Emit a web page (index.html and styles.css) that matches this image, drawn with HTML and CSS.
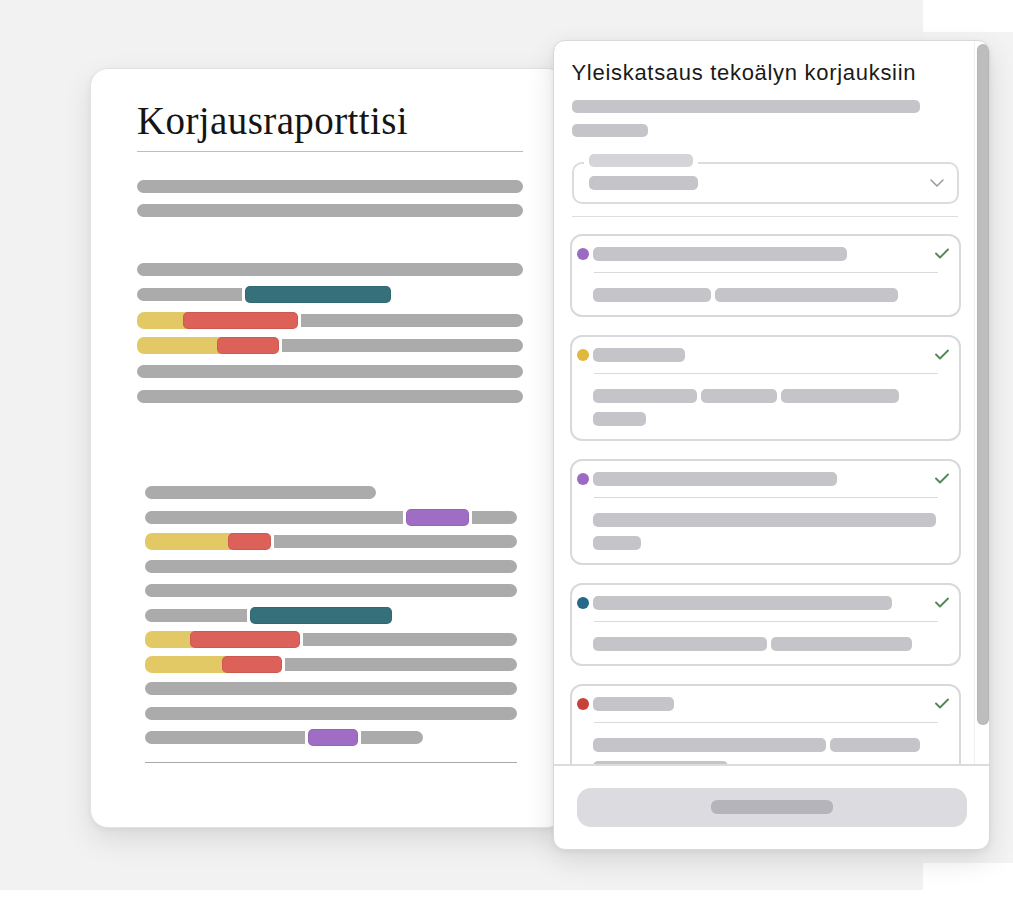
FILE: index.html
```html
<!DOCTYPE html>
<html lang="fi">
<head>
<meta charset="utf-8">
<title>Korjausraportti</title>
<link rel="stylesheet" href="styles.css">
</head>
<body>
<div class="stage">
  <section class="doc">
    <h1 class="doc-title">Korjausraporttisi</h1>

    <div class="group g1a">
      <div class="row"><span class="bar full"></span></div>
      <div class="row"><span class="bar full"></span></div>
    </div>

    <div class="group g1b">
      <div class="row"><span class="bar full"></span></div>
      <div class="row"><span class="bar l" style="width:105px"></span><span class="chip teal" style="width:146px"></span></div>
      <div class="row"><span class="hl" style="width:50px"></span><span class="chip red over" style="width:115px"></span><span class="bar r grow"></span></div>
      <div class="row"><span class="hl" style="width:84px"></span><span class="chip red over" style="width:62px"></span><span class="bar r grow"></span></div>
      <div class="row"><span class="bar full"></span></div>
      <div class="row"><span class="bar full"></span></div>
    </div>

    <div class="group g2">
      <div class="row"><span class="bar full" style="width:231px;flex:none"></span></div>
      <div class="row"><span class="bar l" style="width:258px"></span><span class="chip purple" style="width:63px"></span><span class="bar r grow"></span></div>
      <div class="row"><span class="hl" style="width:87px"></span><span class="chip red over" style="width:43px"></span><span class="bar r grow"></span></div>
      <div class="row"><span class="bar full"></span></div>
      <div class="row"><span class="bar full"></span></div>
      <div class="row"><span class="bar l" style="width:102px"></span><span class="chip teal" style="width:142px"></span></div>
      <div class="row"><span class="hl" style="width:49px"></span><span class="chip red over" style="width:110px"></span><span class="bar r grow"></span></div>
      <div class="row"><span class="hl" style="width:81px"></span><span class="chip red over" style="width:60px"></span><span class="bar r grow"></span></div>
      <div class="row"><span class="bar full"></span></div>
      <div class="row"><span class="bar full"></span></div>
      <div class="row"><span class="bar l" style="width:160px"></span><span class="chip purple" style="width:50px"></span><span class="bar r" style="width:62px"></span></div>
      <div class="rule"></div>
    </div>
  </section>

  <aside class="panel">
    <div class="scroll">
      <div class="content">
        <h2 class="panel-title">Yleiskatsaus tekoälyn korjauksiin</h2>
        <div class="sk line1" style="width:348px"></div>
        <div class="sk line2" style="width:76px"></div>

        <div class="select">
          <span class="select-label"><span class="sk light" style="width:104px"></span></span>
          <span class="sk value" style="width:109px"></span>
          <svg class="chev" width="14" height="8" viewBox="0 0 14 8"><polyline points="1,1 7,7 13,1" fill="none" stroke="#9a9a9a" stroke-width="1.5" stroke-linecap="round" stroke-linejoin="round"/></svg>
        </div>

        <div class="divider"></div>

        <div class="cards">
          <div class="card">
            <div class="card-head">
              <span class="dot purple"></span>
              <span class="sk t" style="width:254px"></span>
              <svg class="check" width="14" height="11" viewBox="0 0 14 11"><polyline points="1,5.5 5,9.5 13,1.5" fill="none" stroke="#558859" stroke-width="1.9" stroke-linecap="round" stroke-linejoin="round"/></svg>
            </div>
            <div class="card-rule"></div>
            <div class="card-body">
              <div class="sk-row"><span class="sk" style="width:118px"></span><span class="sk" style="width:183px"></span></div>
            </div>
          </div>

          <div class="card">
            <div class="card-head">
              <span class="dot yellow"></span>
              <span class="sk t" style="width:92px"></span>
              <svg class="check" width="14" height="11" viewBox="0 0 14 11"><polyline points="1,5.5 5,9.5 13,1.5" fill="none" stroke="#558859" stroke-width="1.9" stroke-linecap="round" stroke-linejoin="round"/></svg>
            </div>
            <div class="card-rule"></div>
            <div class="card-body">
              <div class="sk-row"><span class="sk" style="width:104px"></span><span class="sk" style="width:76px"></span><span class="sk" style="width:118px"></span></div>
              <div class="sk-row"><span class="sk" style="width:53px"></span></div>
            </div>
          </div>

          <div class="card">
            <div class="card-head">
              <span class="dot purple"></span>
              <span class="sk t" style="width:244px"></span>
              <svg class="check" width="14" height="11" viewBox="0 0 14 11"><polyline points="1,5.5 5,9.5 13,1.5" fill="none" stroke="#558859" stroke-width="1.9" stroke-linecap="round" stroke-linejoin="round"/></svg>
            </div>
            <div class="card-rule"></div>
            <div class="card-body">
              <div class="sk-row"><span class="sk" style="width:343px"></span></div>
              <div class="sk-row"><span class="sk" style="width:48px"></span></div>
            </div>
          </div>

          <div class="card">
            <div class="card-head">
              <span class="dot teal"></span>
              <span class="sk t" style="width:299px"></span>
              <svg class="check" width="14" height="11" viewBox="0 0 14 11"><polyline points="1,5.5 5,9.5 13,1.5" fill="none" stroke="#558859" stroke-width="1.9" stroke-linecap="round" stroke-linejoin="round"/></svg>
            </div>
            <div class="card-rule"></div>
            <div class="card-body">
              <div class="sk-row"><span class="sk" style="width:174px"></span><span class="sk" style="width:141px"></span></div>
            </div>
          </div>

          <div class="card">
            <div class="card-head">
              <span class="dot red"></span>
              <span class="sk t" style="width:81px"></span>
              <svg class="check" width="14" height="11" viewBox="0 0 14 11"><polyline points="1,5.5 5,9.5 13,1.5" fill="none" stroke="#558859" stroke-width="1.9" stroke-linecap="round" stroke-linejoin="round"/></svg>
            </div>
            <div class="card-rule"></div>
            <div class="card-body">
              <div class="sk-row"><span class="sk" style="width:233px"></span><span class="sk" style="width:90px"></span></div>
              <div class="sk-row"><span class="sk" style="width:135px"></span></div>
            </div>
          </div>
        </div>
      </div>
      <div class="track"><div class="thumb"></div></div>
    </div>
    <div class="footer">
      <button class="btn" type="button"><span class="sk btn-label"></span></button>
    </div>
  </aside>
</div>
</body>
</html>
```

FILE: styles.css
```css
* { box-sizing: border-box; }

html, body { margin: 0; padding: 0; }

body {
  min-height: 902px;
  font-family: "Liberation Sans", Arial, sans-serif;
  background:
    linear-gradient(#f2f2f2, #f2f2f2) 0 0 / 923px 890px no-repeat,
    linear-gradient(#f3f3f3, #f3f3f3) 923px 32px / 90px 831px no-repeat,
    #ffffff;
}

.stage {
  display: flex;
  align-items: flex-start;
  padding: 40px 0 0 90px;
}

/* ---------- left document card ---------- */
.doc {
  width: 475px;
  height: 760px;
  margin-top: 28px;
  background: #fff;
  border: 1px solid #e3e3e3;
  border-radius: 18px;
  box-shadow: 0 12px 30px rgba(0, 0, 0, 0.10), 0 2px 6px rgba(0, 0, 0, 0.05);
  padding: 30px 41px 0 46px;
  flex: none;
}

.doc-title {
  margin: 0;
  font-family: "Liberation Serif", "Times New Roman", serif;
  font-weight: 400;
  font-size: 39px;
  letter-spacing: 0.4px;
  line-height: 44px;
  color: #151515;
  padding-bottom: 8px;
  border-bottom: 1.5px solid #bdbdbd;
}

.group { display: flex; flex-direction: column; }
.g1a { margin-top: 25.5px; gap: 7px; }
.g1b { margin-top: 42px; gap: 8.6px; }
.g2 { margin: 79px 6px 0 8px; gap: 7.5px; }

.row {
  display: flex;
  align-items: center;
  height: 17px;
  gap: 3px;
}

.bar {
  height: 13px;
  background: #ababab;
  flex: none;
}
.bar.full { flex: 1; border-radius: 7px; }
.bar.l { border-radius: 7px 0 0 7px; }
.bar.r { border-radius: 0 7px 7px 0; }
.bar.grow { flex: 1; }

.chip {
  height: 17px;
  border-radius: 5px;
  flex: none;
  box-shadow: inset 0 0 0 1px rgba(0, 0, 0, 0.07);
  position: relative;
}
.chip.teal { background: #36707b; }
.chip.red { background: #dc6158; }
.chip.purple { background: #a06dc4; }
.chip.over { margin-left: -7px; }

.hl {
  height: 17px;
  background: #e3c966;
  border-radius: 7px 0 0 7px;
  flex: none;
}

.rule {
  height: 1.5px;
  background: #a9a9a9;
  margin-top: 8px;
}

/* ---------- right panel ---------- */
.panel {
  width: 437px;
  height: 810px;
  margin-left: -12px;
  background: #fff;
  border: 1.5px solid #d9d9d9;
  border-radius: 12px;
  box-shadow: 0 10px 28px rgba(0, 0, 0, 0.12), 0 2px 6px rgba(0, 0, 0, 0.05);
  display: flex;
  flex-direction: column;
  overflow: hidden;
  position: relative;
  z-index: 1;
  flex: none;
}

.scroll {
  display: flex;
  height: 722.5px;
  overflow: hidden;
  flex: none;
}

.content {
  flex: 1;
  padding: 18.5px 13px 0 15.5px;
  min-width: 0;
}

.panel-title {
  margin: 0 0 0 2px;
  font-size: 22px;
  font-weight: 400;
  line-height: 26px;
  letter-spacing: 0.7px;
  color: #1a1a1a;
  white-space: nowrap;
}

.sk {
  display: block;
  height: 14px;
  border-radius: 5px;
  background: #c5c4c9;
  flex: none;
}
.sk.light { background: #d5d4d8; height: 13px; }

.line1 { margin: 14px 0 0 2px; height: 13px; }
.line2 { margin: 11px 0 0 2px; height: 13px; }

.select {
  position: relative;
  margin: 25px 2px 0 2px;
  height: 42px;
  border: 2px solid #dcdcdf;
  border-radius: 10px;
  display: flex;
  align-items: center;
  padding: 0 13px 0 15px;
}
.select-label {
  position: absolute;
  top: -10px;
  left: 10px;
  padding: 0 5px 0 5px;
  background: #fff;
}
.chev { margin-left: auto; }

.divider {
  height: 1.5px;
  background: #dedee0;
  margin: 12px 3px 0 2px;
}

.cards {
  margin-top: 16.5px;
  display: flex;
  flex-direction: column;
  gap: 18px;
}

.card {
  border: 2px solid #d9d9dc;
  border-radius: 12px;
  padding: 11px 10px 13px 5px;
  flex: none;
}

.card-head {
  display: flex;
  align-items: center;
  height: 14px;
  gap: 4px;
}
.card-head .check { margin-left: auto; }

.dot {
  width: 12px;
  height: 12px;
  border-radius: 50%;
  flex: none;
}
.dot.purple { background: #9b6bc2; }
.dot.yellow { background: #e0b93c; }
.dot.teal { background: #26688a; }
.dot.red { background: #c6413a; }

.card-rule {
  height: 1.5px;
  background: #dadadd;
  margin: 11px 11px 0 17px;
}

.card-body {
  margin-top: 14.5px;
  padding-left: 16px;
  display: flex;
  flex-direction: column;
  gap: 9px;
}

.sk-row { display: flex; gap: 4px; }

.track {
  width: 15.5px;
  flex: none;
  padding: 2.5px 1.5px 0 2px;
  border-left: 1px solid #f0f0f0;
}
.thumb {
  width: 12px;
  height: 681px;
  border-radius: 6px;
  background: #bdbdbd;
  box-shadow: inset 0 0 0 1px rgba(0, 0, 0, 0.04);
}

.footer {
  flex: 1;
  border-top: 2px solid #dcdcdf;
  padding: 22px 22.5px 0 22.5px;
}

.btn {
  width: 100%;
  height: 39px;
  border: 0;
  border-radius: 14px;
  background: #dcdbe0;
  display: flex;
  align-items: center;
  justify-content: center;
  padding: 0;
  font: inherit;
}
.btn-label {
  width: 122px;
  height: 14px;
  border-radius: 6px;
  background: #b5b4ba;
}
```
